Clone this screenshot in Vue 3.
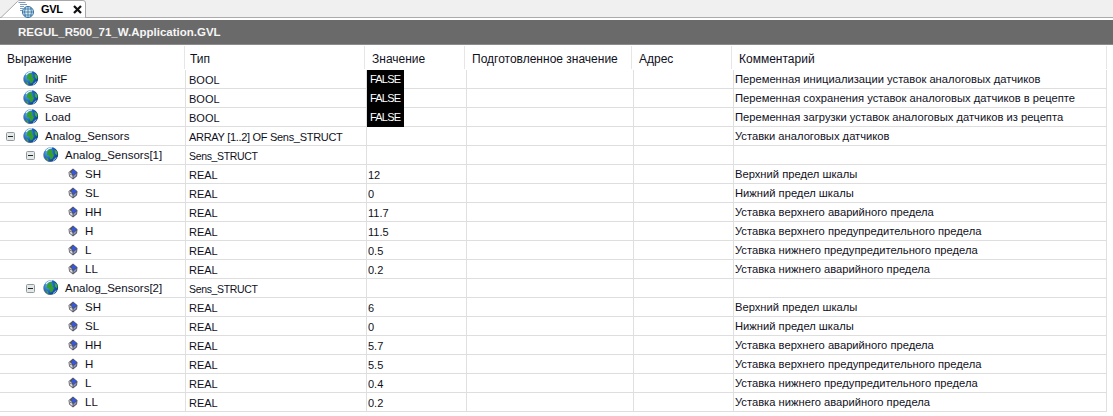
<script setup>
const sensors = (n, vals) => [
  { indent: 1, tree: true, globe: true, name: `Analog_Sensors[${n}]`, type: 'Sens_STRUCT', tight: 'tight-s', value: '', comment: '' },
  ...[
    ['SH', 'Верхний предел шкалы'],
    ['SL', 'Нижний предел шкалы'],
    ['HH', 'Уставка верхнего аварийного предела'],
    ['H', 'Уставка верхнего предупредительного предела'],
    ['L', 'Уставка нижнего предупредительного предела'],
    ['LL', 'Уставка нижнего аварийного предела'],
  ].map(([name, comment], i) => ({ indent: 2, name, type: 'REAL', value: vals[i], comment })),
]
const rows = [
  { indent: 0, globe: true, name: 'InitF', type: 'BOOL', value: 'FALSE', bool: true, comment: 'Переменная инициализации уставок аналоговых датчиков' },
  { indent: 0, globe: true, name: 'Save', type: 'BOOL', value: 'FALSE', bool: true, comment: 'Переменная сохранения уставок аналоговых датчиков в рецепте' },
  { indent: 0, globe: true, name: 'Load', type: 'BOOL', value: 'FALSE', bool: true, comment: 'Переменная загрузки уставок аналоговых датчиков из рецепта' },
  { indent: 0, tree: true, globe: true, name: 'Analog_Sensors', type: 'ARRAY [1..2] OF Sens_STRUCT', tight: 'tight-a', value: '', comment: 'Уставки аналоговых датчиков' },
  ...sensors(1, ['12', '0', '11.7', '11.5', '0.5', '0.2']),
  ...sensors(2, ['6', '0', '5.7', '5.5', '0.4', '0.2']),
]
const headers = ['Выражение', 'Тип', 'Значение', 'Подготовленное значение', 'Адрес', 'Комментарий']
</script>

<template>
  <div class="page">
    <div class="tabbar">
      <div class="tab">
        <svg class="tab-shape" width="87" height="18" viewBox="0 0 87 18">
          <path d="M0.5 18 L17.5 1.5 Q18 0.5 20 0.5 L83 0.5 Q85.5 0.5 85.5 3 L85.5 18 Z" fill="#fff" stroke="#a8a8a8" />
        </svg>
        <svg class="tab-icon" width="16" height="17" viewBox="0 0 16 17">
          <path d="M0.5 1.5h7M2 3.5h7M2 5.5h4M2 7.5h3M2 9.5h3" stroke="#7b9cc4" fill="none" />
          <circle cx="10" cy="11" r="5.5" fill="#dcebf6" stroke="#2f6f9f" />
          <path d="M4.5 11h11M10 5.5v11M6 8h8M6 14h8M7.5 6.5q-2 4.5 0 9M12.5 6.5q2 4.5 0 9" stroke="#2f6f9f" fill="none" stroke-width="0.8" />
        </svg>
        <span class="tab-label">GVL</span>
        <svg class="tab-close" width="9" height="9" viewBox="0 0 9 9">
          <path d="M1 1l7 7M8 1l-7 7" stroke="#111" stroke-width="2.2" fill="none" />
        </svg>
      </div>
    </div>
    <div class="titlebar">REGUL_R500_71_W.Application.GVL</div>
    <div class="grid head">
      <div v-for="(h, i) in headers" :key="h" class="hcell" :class="'hc' + i">{{ h }}</div>
    </div>
    <div v-for="(r, idx) in rows" :key="idx" class="grid row">
      <div class="cell name" :class="'ind' + r.indent">
        <span class="exp-slot">
          <svg v-if="r.tree" width="9" height="9" viewBox="0 0 9 9">
            <rect x="0.5" y="0.5" width="8" height="8" rx="1" fill="#e4e8e8" stroke="#8f9a9a" />
            <path d="M2 4.5h5" stroke="#222" />
          </svg>
        </span>
        <svg v-if="r.globe" class="globe" width="16" height="17" viewBox="0 0 16 17">
          <defs>
            <radialGradient :id="'g' + idx" cx="0.35" cy="0.3" r="0.75">
              <stop offset="0" stop-color="#5fb4f0" />
              <stop offset="0.55" stop-color="#1c66c4" />
              <stop offset="1" stop-color="#0b3c8c" />
            </radialGradient>
          </defs>
          <ellipse cx="7.6" cy="8.9" rx="7.3" ry="7.1" fill="#54708c" transform="rotate(-25 7.6 8.9)" />
          <ellipse cx="8.1" cy="8.2" rx="7" ry="7" :fill="'url(#g' + idx + ')'" transform="rotate(-25 8.1 8.2)" />
          <path d="M4.5 5 Q7.5 2.5 9.5 4.5 L9 7 L11 9 L9.5 12.5 L7.5 13.5 L6.5 10 L3.5 8.5 Z" fill="#35a02e" />
          <path d="M11.5 3.5 L14.5 6 L14 9.5 L12 7.5 Z M2.5 11 L5.5 13 L5 15 Z" fill="#3fae35" />
          <path d="M3 5 Q5 1.8 9 1.8" stroke="#e6f6ff" stroke-width="1.3" fill="none" />
          <path d="M13 11.5 Q12 13.5 10 14.5" stroke="#8fd0f5" stroke-width="1" fill="none" />
        </svg>
        <svg v-else class="cube" width="10" height="12" viewBox="0 0 10 12">
          <path d="M5 0.5 L9.5 4.2 L9 8.2 L5 11.5 L1 8.2 L0.5 4.2 Z" fill="#55555c" />
          <path d="M5.5 1.5 L8.8 4.3 L5.5 7 L3.4 4.3 Z" fill="#3558e0" />
          <path d="M1.3 3.8 L3 5.2 L4.5 8 L4.5 10.2 L1.8 7.9 Z" fill="#dcdce2" />
          <path d="M2.4 5.6 L3.3 6.4 L3.3 7.4 L2.4 6.6 Z" fill="#50505a" />
          <path d="M5.5 8 L8.6 5.6 L8.2 7.8 L5.5 10 Z" fill="#8a96d8" />
        </svg>
        <span class="name-text">{{ r.name }}</span>
      </div>
      <div class="cell type" :class="r.tight">{{ r.type }}</div>
      <div class="cell value">
        <span v-if="r.bool" class="bool">{{ r.value }}</span>
        <span v-else class="plain">{{ r.value }}</span>
      </div>
      <div class="cell"></div>
      <div class="cell"></div>
      <div class="cell comment">{{ r.comment }}</div>
    </div>
  </div>
</template>

<style scoped>
.page {
  width: 1113px;
  height: 416px;
  overflow: hidden;
  background: #fff;
  font-family: "Liberation Sans", Arial, sans-serif;
  font-size: 11px;
  color: #10101c;
}
.tabbar {
  height: 17px;
  background: #f0f0f0;
  border-bottom: 1px solid #ababab;
  margin-bottom: 2px;
}
.tab {
  position: relative;
  width: 86px;
  height: 18px;
  display: flex;
  align-items: center;
}
.tab-shape {
  position: absolute;
  left: 0;
  top: 0;
}
.tab-icon {
  position: relative;
  margin-left: 18px;
}
.tab-label {
  position: relative;
  margin-left: 7px;
  font-weight: 700;
  font-size: 11px;
  letter-spacing: -0.3px;
  color: #000;
}
.tab-close {
  position: relative;
  margin-left: 10px;
}
.titlebar {
  height: 24px;
  line-height: 24px;
  padding-left: 18px;
  background: #6a6a6a;
  border-bottom: 1px solid #8c8c8c;
  color: #f6f6f6;
  font-weight: 700;
  font-size: 11.5px;
}
.grid {
  display: grid;
  grid-template-columns: 186px 181px 100px 167px 100px 373px;
}
.head {
  height: 25px;
  width: 1107px;
  grid-template-columns: 185px 180px 100px 167px 100px 375px;
}
.hcell {
  font-size: 12px;
  line-height: 26px;
  padding-left: 7px;
  height: 23px;
  margin-top: 1px;
  border-right: 1px solid #e6e6e6;
  box-sizing: border-box;
  white-space: nowrap;
}
.hc1 { padding-left: 5px; }
.row {
  height: 19px;
  border-bottom: 1px solid #dedede;
  box-sizing: border-box;
  width: 1107px;
}
.cell {
  border-right: 1px solid #e0e0e0;
  box-sizing: border-box;
  height: 18px;
  line-height: 20px;
  padding-left: 3px;
  white-space: nowrap;
}
.name {
  display: flex;
  align-items: center;
  padding-left: 6px;
  font-size: 11.5px;
}
.ind1 { padding-left: 26px; }
.ind2 { padding-left: 46px; }
.exp-slot {
  width: 17px;
  flex: none;
  display: flex;
  align-items: center;
  height: 12px;
}
.globe { flex: none; margin-top: -1px; }
.cube { flex: none; margin-left: 5px; margin-right: 1px; margin-top: -1px; }
.name-text {
  margin-left: 6px;
  line-height: 15px;
}
.tight-a { letter-spacing: -0.3px; }
.tight-s { font-size: 10.5px; letter-spacing: -0.35px; }
.value { padding-left: 0; }
.plain { padding-left: 1px; font-size: 11px; }
.bool {
  display: block;
  background: #000;
  color: #fff;
  width: 37px;
  height: 19px;
  line-height: 18px;
  padding-left: 3px;
  box-sizing: border-box;
  font-size: 11px;
  letter-spacing: -0.8px;
}
.comment { padding-left: 1px; font-size: 11.2px; line-height: 18px; }
</style>
